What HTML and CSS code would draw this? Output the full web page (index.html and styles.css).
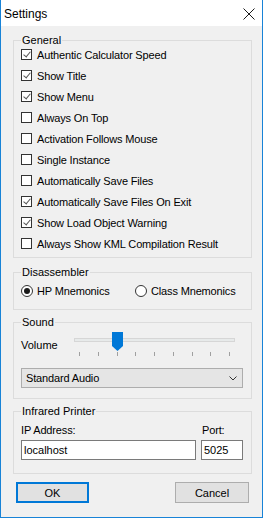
FILE: index.html
```html
<!DOCTYPE html>
<html>
<head>
<meta charset="utf-8">
<title>Settings</title>
<link rel="stylesheet" href="styles.css">
</head>
<body>
<div class="window">
  <div class="titlebar">
    <span class="title">Settings</span>
    <svg class="close" width="12" height="12" viewBox="0 0 12 12"><path d="M0.5 0.5 L11.5 11.5 M11.5 0.5 L0.5 11.5" stroke="#1a1a1a" stroke-width="1" fill="none"/></svg>
  </div>
  <div class="content">
    <fieldset class="group general">
      <legend>General</legend>
      <div class="checks">
        <div class="row"><span class="box checked"></span><span>Authentic Calculator Speed</span></div>
        <div class="row"><span class="box checked"></span><span>Show Title</span></div>
        <div class="row"><span class="box checked"></span><span>Show Menu</span></div>
        <div class="row"><span class="box"></span><span>Always On Top</span></div>
        <div class="row"><span class="box"></span><span>Activation Follows Mouse</span></div>
        <div class="row"><span class="box"></span><span>Single Instance</span></div>
        <div class="row"><span class="box"></span><span>Automatically Save Files</span></div>
        <div class="row"><span class="box checked"></span><span>Automatically Save Files On Exit</span></div>
        <div class="row"><span class="box checked"></span><span>Show Load Object Warning</span></div>
        <div class="row"><span class="box"></span><span>Always Show KML Compilation Result</span></div>
      </div>
    </fieldset>
    <fieldset class="group disasm">
      <legend>Disassembler</legend>
      <div class="radios">
        <div class="radio-item first"><span class="radio on"></span><span>HP Mnemonics</span></div>
        <div class="radio-item"><span class="radio"></span><span>Class Mnemonics</span></div>
      </div>
    </fieldset>
    <fieldset class="group sound">
      <legend>Sound</legend>
      <div class="volume">
        <span class="vol-label">Volume</span>
        <div class="slider">
          <div class="track"></div>
          <svg class="thumb" width="11" height="19" viewBox="0 0 11 19"><path d="M0 0 H11 V14 L5.5 19 L0 14 Z" fill="#0078d7"/></svg>
          <div class="ticks"><i></i><i></i><i></i><i></i><i></i><i></i><i></i><i></i><i></i></div>
        </div>
      </div>
      <div class="combo">
        <span>Standard Audio</span>
        <svg width="8" height="5" viewBox="0 0 8 5"><path d="M0.5 0.5 L4 4 L7.5 0.5" stroke="#333" stroke-width="1" fill="none"/></svg>
      </div>
    </fieldset>
    <fieldset class="group printer">
      <legend>Infrared Printer</legend>
      <div class="printer-grid">
        <span class="lbl">IP Address:</span>
        <span class="lbl port-lbl">Port:</span>
        <div class="input ip">localhost</div>
        <div class="input port">5025</div>
      </div>
    </fieldset>
    <div class="buttons">
      <div class="btn default">OK</div>
      <div class="btn">Cancel</div>
    </div>
  </div>
</div>
</body>
</html>
```
FILE: styles.css
```css
* { box-sizing: border-box; }
html, body { margin: 0; padding: 0; background: #f0f0f0; }
body {
  font-family: "Liberation Sans", Arial, sans-serif;
  font-size: 11px;
  color: #000;
}
.window {
  width: 263px;
  height: 518px;
  border: 1px solid #1883d7;
  border-top: none;
  background: #f0f0f0;
  display: flex;
  flex-direction: column;
}
.titlebar {
  height: 26px;
  background: #fff;
  display: flex;
  align-items: center;
  justify-content: space-between;
  padding-left: 3px;
  padding-right: 7px;
  flex: none;
}
.title { font-size: 12px; line-height: 14px; margin-top: 1px; }
.close { display: block; margin-top: 2px; }
.content { display: flex; flex-direction: column; }
.group {
  margin: 8px 10px 0 12px;
  padding: 0 8px 3px 7px;
  border: 1px solid #dcdcdc;
  min-width: 0;
}
.group legend {
  padding: 0 1px;
  line-height: 12px;
  font-size: 11px;
}
.checks { margin-top: -2px; display: flex; flex-direction: column; }
.row {
  height: 21px;
  display: flex;
  align-items: center;
  white-space: nowrap;
  letter-spacing: -0.15px;
}
.box {
  width: 11px;
  height: 11px;
  border: 1px solid #333;
  background: #fff;
  margin-right: 5px;
  flex: none;
  position: relative;
}
.box.checked::after {
  content: "";
  position: absolute;
  left: 3px;
  top: 0px;
  width: 3px;
  height: 6px;
  border-right: 1.5px solid #555;
  border-bottom: 1.5px solid #555;
  transform: rotate(40deg);
}
.disasm { margin-top: 8px; padding-bottom: 7px; }
.radios { display: flex; height: 22px; margin-top: 2px; align-items: center; }
.radio-item { display: flex; align-items: center; letter-spacing: -0.15px; white-space: nowrap; }
.radio-item.first { width: 114px; }
.radio {
  width: 12px;
  height: 12px;
  border: 1px solid #333;
  border-radius: 50%;
  background: #fff;
  margin-right: 4px;
  flex: none;
  display: flex;
  align-items: center;
  justify-content: center;
}
.radio.on::after {
  content: "";
  width: 6px;
  height: 6px;
  border-radius: 50%;
  background: #1a1a1a;
}
.sound { margin-top: 6px; padding-bottom: 10px; }
.volume { display: flex; align-items: center; height: 24px; margin-top: 4px; }
.vol-label { width: 53px; padding-top: 2px; flex: none; }
.slider { position: relative; width: 161px; height: 24px; }
.track {
  position: absolute;
  left: 0; right: 0; top: 6px;
  height: 4px;
  border: 1px solid #d6d6d6;
  background: #e7eaea;
}
.thumb { position: absolute; left: 38px; top: 0; }
.ticks {
  position: absolute;
  left: 5px; right: 5px; top: 20px;
  display: flex;
  justify-content: space-between;
}
.ticks i { display: block; width: 1px; height: 4px; background: #a0a0a0; }
.combo {
  margin-top: 12px;
  height: 20px;
  border: 1px solid #adadad;
  background: #e5e5e5;
  display: flex;
  align-items: center;
  justify-content: space-between;
  padding: 0 5px 0 4px;
  letter-spacing: -0.15px;
}
.combo svg { display: block; }
.printer { margin-top: 6px; padding-bottom: 13px; }
.printer-grid {
  display: grid;
  grid-template-columns: 175px 42px;
  column-gap: 5px;
  margin-top: 7px;
}
.lbl { line-height: 13px; height: 16px; letter-spacing: -0.15px; }
.port-lbl { padding-left: 1px; }
.input {
  height: 20px;
  border: 1px solid #7a7a7a;
  background: #fff;
  padding-left: 2px;
  line-height: 18px;
}
.buttons {
  display: flex;
  justify-content: space-between;
  margin: 8px 13px 0 15px;
}
.btn {
  width: 73px;
  height: 21px;
  border: 1px solid #adadad;
  background: #e1e1e1;
  display: flex;
  align-items: center;
  justify-content: center;
}
.btn.default { border: 2px solid #0078d7; }
.btn:last-child { width: 74px; }
```
